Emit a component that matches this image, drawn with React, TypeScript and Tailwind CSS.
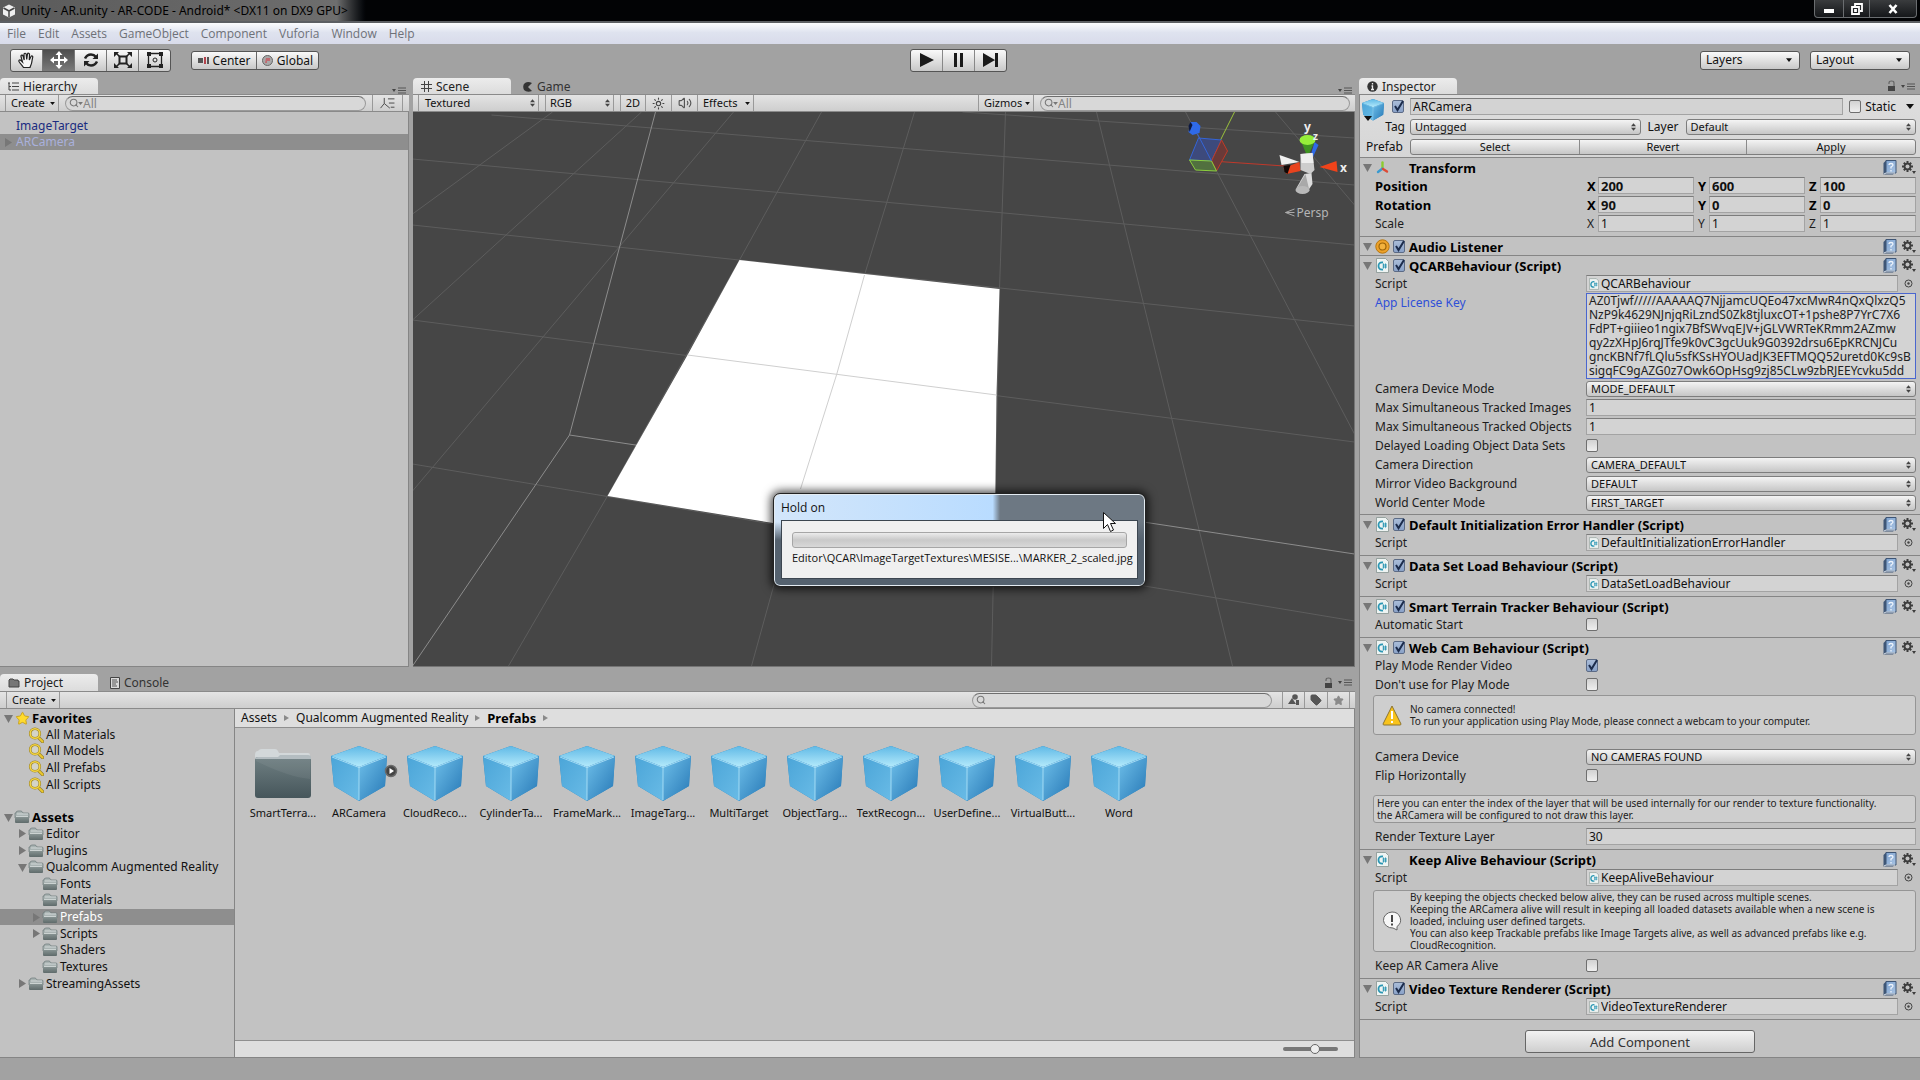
import { useId } from 'react'
import type { ReactNode } from 'react'
import { Search, Star, Sun, Tag, Volume2 } from 'lucide-react'
import clsx from 'clsx'

const MENUS = ['File', 'Edit', 'Assets', 'GameObject', 'Component', 'Vuforia', 'Window', 'Help']

const PREFABS = [
  'ARCamera',
  'CloudReco...',
  'CylinderTa...',
  'FrameMark...',
  'ImageTarg...',
  'MultiTarget',
  'ObjectTarg...',
  'TextRecogn...',
  'UserDefine...',
  'VirtualButt...',
  'Word',
]

const LICENSE_KEY = [
  'AZ0Tjwf/////AAAAAQ7NjjamcUQEo47xcMwR4nQxQlxzQ5',
  'NzP9k4629NJnjqRiLzndS0Zk8tjluxcOT+1pshe8P7YrC7X6',
  'FdPT+giiieo1ngix7BfSWvqEJV+jGLVWRTeKRmm2AZmw',
  'qy2zXHpJ6rqJTfe9k0vC3gcUuk9G0392drsu6EpKRCNJCu',
  'gncKBNf7fLQlu5sfKSsHYOUadJK3EFTMQQ52uretd0Kc9sB',
  'sigqFC9gAZG0z7Owk6OpHsg9zj85CLw9zbRJEEYcvku5dd',
].join('\n')

/* ---------- icons ---------- */

function SharedGradients() {
  return (
    <svg width="0" height="0" className="absolute" aria-hidden="true">
      <defs>
        <linearGradient id="cube-top" x1="0" y1="0" x2="0" y2="1">
          <stop offset="0" stopColor="#5fb9e6" />
          <stop offset="1" stopColor="#b5eafb" />
        </linearGradient>
        <linearGradient id="cube-left" x1="0" y1="0" x2="1" y2="1">
          <stop offset="0" stopColor="#4ba5d8" />
          <stop offset="1" stopColor="#69bbe6" />
        </linearGradient>
        <linearGradient id="cube-right" x1="0" y1="0" x2="1" y2="1">
          <stop offset="0" stopColor="#6fc0ea" />
          <stop offset="1" stopColor="#2677b5" />
        </linearGradient>
        <linearGradient id="folder" x1="0" y1="0" x2="0" y2="1">
          <stop offset="0" stopColor="#6f7f82" />
          <stop offset="1" stopColor="#46565b" />
        </linearGradient>
        <linearGradient id="folder-small" x1="0" y1="0" x2="0" y2="1">
          <stop offset="0" stopColor="#8d9998" />
          <stop offset="1" stopColor="#5f6b6b" />
        </linearGradient>
        <linearGradient id="book" x1="0" y1="0" x2="1" y2="1">
          <stop offset="0" stopColor="#7fa3cf" />
          <stop offset="1" stopColor="#a9c4e4" />
        </linearGradient>
      </defs>
    </svg>
  )
}

function Cube({ className }: { className?: string }) {
  return (
    <svg viewBox="0 0 56 56" className={className} aria-hidden="true">
      <path d="M28 0 56 10 54 40 28 55 3 40 0 10Z" fill="#2f86c0" />
      <path d="M28 0 56 10 28 21 0 10Z" fill="url(#cube-top)" />
      <path d="M0 10 28 21V55L3 40Z" fill="url(#cube-left)" />
      <path d="M56 10 28 21V55L54 40Z" fill="url(#cube-right)" />
      <path d="M1 11 28 21.500 55 11M28 21V54" fill="none" stroke="#b4e6fa" strokeWidth="1" opacity=".8" />
    </svg>
  )
}

function BigFolder() {
  return (
    <svg viewBox="0 0 58 50" className="h-[50px] w-[58px]" aria-hidden="true">
      <path d="M1 6q0-4 3-4l1-1q1-1 3-1h13q2 0 3 2l1 2h29q2 0 2 2v10H1Z" fill="#d3d8da" />
      <rect x="1" y="8" width="56" height="41" rx="3" fill="url(#folder)" />
      <path d="M1 10q0-2 3-2h20l2-2h28q3 0 3 3v1H1Z" fill="#b4bdc1" />
      <path d="M2 10h54v20Q34 28 2 12Z" fill="#fff" opacity=".06" />
    </svg>
  )
}

function FolderIcon() {
  return (
    <svg viewBox="0 0 16 14" className="h-[14px] w-4 shrink-0" aria-hidden="true">
      <path d="M2 3q0-2 2-2h3q1 0 2 2h5q1 0 1 1v4H1V3Z" fill="#a9b3b2" stroke="#6c7878" strokeWidth=".7" />
      <path d="M1 6h14v6q0 1-1 1H2q-1 0-1-1Z" fill="url(#folder-small)" />
      <path d="M3 4h11M2 6.500h12" stroke="#dde2e2" strokeWidth=".8" />
    </svg>
  )
}

function Magnifier() {
  return (
    <svg viewBox="0 0 16 16" className="h-4 w-4 shrink-0" aria-hidden="true">
      <path d="m10 10 4.500 4.500" stroke="#9a8224" strokeWidth="3.200" strokeLinecap="round" />
      <path d="m10 10 4.500 4.500" stroke="#ecc92f" strokeWidth="1.800" strokeLinecap="round" />
      <circle cx="7" cy="6.500" r="4.800" fill="#d4d4c8" stroke="#9a8224" strokeWidth="2.600" />
      <circle cx="7" cy="6.500" r="4.800" fill="none" stroke="#f3d443" strokeWidth="1.500" />
    </svg>
  )
}

function ScriptIcon({ className }: { className?: string }) {
  return (
    <svg viewBox="0 0 13 15" className={className} aria-hidden="true">
      <path d="M.5.500h9l3 3v11H.500Z" fill="#eef4f3" stroke="#85938f" strokeWidth=".8" />
      <path d="M7 4.500Q2.500 4 2.500 8t4.500 3.500" fill="none" stroke="#2b96b3" strokeWidth="1.800" />
      <path d="M7.500 5.500v5M9.500 5.500v5M6.500 7h4.500M6.500 9h4.500" stroke="#2b96b3" strokeWidth=".9" />
    </svg>
  )
}

function HelpBook() {
  return (
    <svg viewBox="0 0 14 15" className="h-[15px] w-[14px]" aria-hidden="true">
      <path d="M.5 3 3 .5h9v12L10 14.500H.500Z" fill="#3f5676" />
      <path d="M3 .5h10v12.500H3Z" fill="url(#book)" stroke="#3f5676" strokeWidth="1" />
      <path d="M1 14 3 13h9" stroke="#dfe6ef" strokeWidth="1" fill="none" />
      <path d="M6 5q0-1.500 2-1.500T10 5q0 1-2 2v1.500M8 10v1.500" fill="none" stroke="#eef4fc" strokeWidth="1.300" />
    </svg>
  )
}

function Gear() {
  return (
    <svg viewBox="0 0 14 14" className="h-[14px] w-[14px]" aria-hidden="true">
      <g stroke="#3d3d3d" strokeWidth="2">
        <path d="M5.500 0v11M0 5.500h11M1.800 1.800l7.400 7.400M9.200 1.800l-7.400 7.400" />
      </g>
      <circle cx="5.500" cy="5.500" r="3.800" fill="#3d3d3d" />
      <circle cx="5.500" cy="5.500" r="2" fill="#c2c2c2" />
      <path d="M10 10h4l-2 3Z" fill="#3d3d3d" />
    </svg>
  )
}

function LockIcon() {
  return (
    <svg viewBox="0 0 9 12" className="mr-[5px] h-3 w-[9px]" aria-hidden="true">
      <path d="M2 4V3q0-2 2.500-2T7 3v3" fill="none" stroke="#666" strokeWidth="1.200" />
      <path d="M1 6h7v5H1Z" fill="#444" />
    </svg>
  )
}

function Caret({ className }: { className?: string }) {
  return (
    <svg viewBox="0 0 8 5" className={clsx('shrink-0', className)} aria-hidden="true">
      <path d="M0 0h8L4 5Z" fill="currentColor" />
    </svg>
  )
}

function Foldout({ open }: { open?: boolean }) {
  return (
    <svg viewBox="0 0 9 9" className="h-[9px] w-[9px] shrink-0 text-[#777]" aria-hidden="true">
      <path d={open ? 'M0 1h9L4.500 9Z' : 'M1 0v9l7-4.500Z'} fill="currentColor" />
    </svg>
  )
}

function PopupArrows() {
  return (
    <svg viewBox="0 0 5 8" className="h-2 w-[5px] shrink-0" aria-hidden="true">
      <path d="M0 3.200h5L2.500.300ZM0 4.800h5L2.500 7.700Z" fill="#444" />
    </svg>
  )
}

function PaneMenu() {
  return (
    <svg viewBox="0 0 14 7" className="h-[7px] w-[14px]" aria-hidden="true">
      <path d="M0 2h4L2 5Z" fill="#444" />
      <path d="M6 1h8M6 3.500h8M6 6h8" stroke="#555" strokeWidth="1.200" />
    </svg>
  )
}

/* ---------- controls ---------- */

function Checkbox({ id, checked, label }: { id?: string; checked?: boolean; label?: string }) {
  return (
    <span className="relative block h-[13px] w-[13px] shrink-0">
      <input
        id={id}
        type="checkbox"
        defaultChecked={checked}
        aria-label={label}
        className="peer block h-[13px] w-[12px] appearance-none rounded-[2px] border border-[#6f6f6f] bg-linear-to-b from-[#d2d2d2] to-[#efefef] checked:border-[#5c6b86] checked:from-[#a9bcd8] checked:to-[#8aa2c8]"
      />
      <svg
        viewBox="0 0 13 13"
        className="pointer-events-none absolute inset-0 hidden overflow-visible peer-checked:block"
        aria-hidden="true"
      >
        <path d="M3 6 5.500 10 11 1" fill="none" stroke="#1c2c4c" strokeWidth="2" />
      </svg>
    </span>
  )
}

function Popup({ id, value, label }: { id?: string; value: string; label?: string }) {
  return (
    <span className="relative flex h-4 min-w-0 flex-1 items-center">
      <select
        id={id}
        aria-label={label}
        className="h-4 w-full appearance-none rounded-[3px] border border-[#7d7d7d] bg-linear-to-b from-[#f4f4f4] to-[#c6c6c6] px-[4px] text-[11px] leading-[14px] text-[#111]"
      >
        <option>{value}</option>
      </select>
      <span className="pointer-events-none absolute right-[5px]">
        <PopupArrows />
      </span>
    </span>
  )
}

const fieldClass =
  'h-[17px] min-w-0 flex-1 border border-[#a3a3a3] border-t-[#7c7c7c] bg-[#d3d3d3] px-[2px] leading-[15px] text-[#111] outline-none'

function Row({ label, blue, children }: { label: string; blue?: boolean; children: (id: string) => ReactNode }) {
  const id = useId()
  return (
    <div className="flex min-h-[19px] items-start pr-1 pl-[15px]">
      <label htmlFor={id} className={clsx('w-[211px] shrink-0 leading-[19px]', blue && 'text-[#2f4fd8]')}>
        {label}
      </label>
      <div className="flex min-h-[19px] min-w-0 flex-1 items-center">{children(id)}</div>
    </div>
  )
}

function NumberRow({ label, value }: { label: string; value: string }) {
  return <Row label={label}>{(id) => <input id={id} defaultValue={value} className={fieldClass} />}</Row>
}

function PopupRow({ label, value }: { label: string; value: string }) {
  return <Row label={label}>{(id) => <Popup id={id} value={value} />}</Row>
}

function ToggleRow({ label, checked }: { label: string; checked?: boolean }) {
  return <Row label={label}>{(id) => <Checkbox id={id} checked={checked} />}</Row>
}

function ScriptRow({ name }: { name: string }) {
  return (
    <Row label="Script">
      {(id) => (
        <>
          <span className="relative flex min-w-0 flex-1 items-center">
            <input id={id} readOnly defaultValue={name} className={clsx(fieldClass, 'pl-[14px]')} />
            <ScriptIcon className="absolute left-[3px] h-[12px] w-[10px]" />
          </span>
          <button type="button" aria-label={`Pick ${name}`} className="flex w-[18px] justify-end pr-[3px]">
            <svg viewBox="0 0 9 9" className="h-[9px] w-[9px]">
              <circle cx="4.500" cy="4.500" r="3.500" fill="none" stroke="#444" />
              <circle cx="4.500" cy="4.500" r="1.200" fill="#444" />
            </svg>
          </button>
        </>
      )}
    </Row>
  )
}

function VectorRow({ label, values, bold }: { label: string; values: string[]; bold?: boolean }) {
  return (
    <fieldset className={clsx('flex h-[19px] items-center pr-1 pl-[15px]', bold && 'text-[13px] font-bold text-black')}>
      <legend className="contents">
        <span className="w-[212px] shrink-0">{label}</span>
      </legend>
      <div className="grid flex-1 grid-cols-3 gap-x-1">
        {['X', 'Y', 'Z'].map((axis, i) => (
          <label key={axis} className="flex min-w-0 items-center">
            <span className="w-[11px] shrink-0">{axis}</span>
            <input defaultValue={values[i]} className={fieldClass} />
          </label>
        ))}
      </div>
    </fieldset>
  )
}

interface SectionProps {
  title: string
  icon?: ReactNode
  toggle?: boolean
  className?: string
  children?: ReactNode
}

function Section({ title, icon, toggle = true, className = 'pb-[3px]', children }: SectionProps) {
  return (
    <section className={clsx('border-t border-[#858585]', className)}>
      <div className="flex h-[18px] items-center pt-px pr-1 pl-[3px]">
        <span className="w-[13px] shrink-0">
          <Foldout open />
        </span>
        <span className="w-[17px] shrink-0">{icon ?? <ScriptIcon className="h-[15px] w-[13px]" />}</span>
        <span className="w-4 shrink-0">{toggle && <Checkbox checked label={`Enable ${title}`} />}</span>
        <h2 className="flex-1 text-[13px] font-bold text-black">{title}</h2>
        <button type="button" aria-label="Help" className="mr-[5px]">
          <HelpBook />
        </button>
        <button type="button" aria-label="Settings">
          <Gear />
        </button>
      </div>
      {children}
    </section>
  )
}

function HelpBox({ icon, className, children }: { icon?: ReactNode; className: string; children: ReactNode }) {
  return (
    <div
      className={clsx(
        'mr-1 ml-[13px] flex items-center rounded-[3px] border border-[#959595] bg-[#cecece] text-[10px] leading-[12px] text-[#222]',
        className,
      )}
    >
      {icon && <span className="flex w-9 shrink-0 justify-center">{icon}</span>}
      <p className={clsx(!icon && 'pl-[3px]')}>{children}</p>
    </div>
  )
}

/* ---------- panes ---------- */

function ActiveTab({ icon, children }: { icon: ReactNode; children: ReactNode }) {
  return (
    <button
      type="button"
      className="flex h-full w-[98px] items-center gap-1 rounded-t-[4px] bg-linear-to-b from-[#ececec] to-[#dcdcdc] pt-px pl-2 text-[#222]"
    >
      {icon}
      {children}
    </button>
  )
}

function PaneBar({ children }: { children: ReactNode }) {
  return (
    <div className="flex h-[18px] shrink-0 items-center border-t border-b border-t-[#8a8a8a] border-b-[#8a8a8a] bg-linear-to-b from-[#e4e4e4] to-[#cecece] text-[11px] text-[#111]">
      {children}
    </div>
  )
}

function Divider() {
  return <span className="h-full w-px shrink-0 bg-[#999]" />
}

function SearchField({ label, placeholder, className }: { label: string; placeholder?: string; className: string }) {
  return (
    <span className={clsx('relative flex items-center', className)}>
      <input
        type="text"
        aria-label={label}
        placeholder={placeholder}
        className="h-[15px] w-full rounded-full border border-[#9a9a9a] border-t-[#6e6e6e] bg-[#d8d8d8] pl-[17px] text-[12px] leading-[13px] outline-none placeholder:text-[#858585]"
      />
      <Search className="absolute left-1 h-[10px] w-[10px] text-[#777]" strokeWidth={2.5} />
      {placeholder && <Caret className="absolute left-[13px] h-[3px] w-[5px] text-[#777]" />}
    </span>
  )
}

function Hierarchy() {
  return (
    <section className="flex w-[409px] shrink-0 flex-col">
      <div className="flex h-4 items-end justify-between pr-[3px]">
        <ActiveTab
          icon={
            <svg viewBox="0 0 11 9" className="h-[9px] w-[11px]">
              <path d="M0 1h2M1 1v7M1 4.500h2M1 8h2M4 1h7M4 4.500h7M4 8h7" stroke="#444" />
            </svg>
          }
        >
          Hierarchy
        </ActiveTab>
        <PaneMenu />
      </div>
      <PaneBar>
        <span className="w-[5px]" />
        <Divider />
        <button type="button" className="flex h-full w-[52px] items-center gap-[5px] pl-[5px]">
          Create <Caret className="h-[3px] w-[5px]" />
        </button>
        <Divider />
        <SearchField label="Search hierarchy" placeholder="All" className="mx-[6px] flex-1" />
        <Divider />
        <button type="button" aria-label="Sort" className="flex h-full w-[29px] items-center justify-center">
          <svg viewBox="0 0 17 14" className="h-[13px] w-[17px]" fill="none" stroke="#444">
            <path d="M5 1v6M5 7 1 12M5 7l6 5M9 2h7M10 6.500h6M12 11h4" />
          </svg>
        </button>
        <Divider />
        <span className="w-[6px]" />
      </PaneBar>
      <ul className="flex-1 border-r border-b border-[#858585] bg-[#c2c2c2] pt-[6px]">
        <li className="flex h-4 items-center pl-4 text-[#1a2c80]">ImageTarget</li>
        <li className="flex h-4 items-center bg-[#8e8e8e] pl-1 text-[#a9b0dc]">
          <span className="w-3">
            <Foldout />
          </span>
          ARCamera
        </li>
      </ul>
    </section>
  )
}

function SceneView() {
  return (
    <div className="relative min-h-0 flex-1 border-r border-b border-[#757575] bg-[#464646]">
      <svg viewBox="0 0 942 554" preserveAspectRatio="xMidYMid slice" className="absolute inset-0 h-full w-full">
        {/* floor grid */}
        <g fill="none" stroke="#5d5d5d">
          <path d="M550 0 942 26M79 3 942 73M0 47 942 133M0 113 942 214M0 208 942 330M0 352 942 509" />
          <path d="M140 0 0 102M229 0 0 208M321 0 0 379M409 0 327 148 195 384 96 554M502 0 452 163 388 377 339 554" />
          <path d="M593 0 587 177 579 554M684 0 820 554M773 0 942 322M863 0 942 93" />
        </g>
        <path d="M243 0 157 323 0 554M157 323 942 442" fill="none" stroke="#8c8c8c" />
        {/* image target plane */}
        <path d="M327 148 587 177 584 283 582 447 195 384 275 243Z" fill="#fff" />
        <path d="M452 163 424 263 388 377M275 243 584 283" fill="none" stroke="#cfcfcf" />
        {/* move handle */}
        <path d="M822 0 808 28" stroke="#9bc23c" />
        <path d="M799 49 872 54" stroke="#c0392b" />
        <path d="M786 26 809 28 799 49 777 48Z" fill="#3d4a7c" stroke="#3465d8" />
        <path d="M809 28 815 39 804 59 799 49Z" fill="#6a3a38" stroke="#c23a26" />
        <path d="M777 48 799 49 804 59 783 58Z" fill="#51703f" stroke="#8ccf3e" />
        <path d="M785 22 799 49" stroke="#3465d8" />
        <path d="M778 10 784 10 788 14 787 21 780 23 776 20Z" fill="#2f6ae8" />
        <path d="M776 14 778 10 780 13 777 20Z" fill="#0c1840" />
        {/* orientation gizmo */}
        <path d="M898 44 902 30 906 33 900 46Z" fill="#2f6ae8" />
        <path d="M888 28 895 45 903 28Z" fill="#3f9322" />
        <ellipse cx="895" cy="28" rx="8" ry="5" fill="#96ee3a" />
        <path d="M867 43 869 53 887 50Z" fill="#f0f0f0" />
        <path d="M887 50 871 56 874 62 888 59Z" fill="#e8431e" />
        <path d="M871 54 878 53 875 62 872 60Z" fill="#120806" />
        <path d="M907 55 924 49 925 60Z" fill="#f0431a" />
        <path d="M892 62 884 76 896 78 900 72 899 61Z" fill="#dcdcdc" />
        <path d="M893 62 884 77 897 79Z" fill="#a9a9a9" />
        <ellipse cx="890" cy="78" rx="7" ry="4" fill="#b9b9b9" />
        <path d="M888 42 900 41 902 58 898 62 888 58Z" fill="#cdcdcd" />
        <path d="M888 42 900 41 901 51 889 51Z" fill="#eee" />
        <g fill="#eee" fontFamily="Noto Sans" fontSize="12" fontWeight="bold" textAnchor="middle">
          <text x="895" y="19">y</text>
          <text x="903" y="28" fontSize="10">z</text>
          <text x="931" y="60">x</text>
        </g>
        <path d="M882 97 873 100.500 882 104M873 100.500h9" fill="none" stroke="#aaa" />
        <text x="884" y="105" fill="#b5b5b5" fontFamily="Noto Sans" fontSize="12">
          Persp
        </text>
      </svg>
    </div>
  )
}

function Scene() {
  return (
    <section className="flex min-w-0 flex-1 flex-col">
      <div className="flex h-4 items-end pr-[3px]">
        <ActiveTab
          icon={
            <svg viewBox="0 0 11 11" className="h-[11px] w-[11px]">
              <path d="M3.500 0v11M7.500 0v11M0 3.500h11M0 7.500h11" stroke="#444" />
            </svg>
          }
        >
          Scene
        </ActiveTab>
        <button type="button" className="ml-3 flex h-full items-center gap-[5px] pt-px text-[#333]">
          <svg viewBox="0 0 9 10" className="h-[10px] w-[9px]">
            <path d="M9 1Q5-1 2 1T1 8q3 3 8 1L5 5Z" fill="#333" />
          </svg>
          Game
        </button>
        <span className="flex-1" />
        <PaneMenu />
      </div>
      <PaneBar>
        <span className="w-[5px]" />
        <Divider />
        <button type="button" className="flex h-full w-[119px] items-center justify-between pr-[3px] pl-[6px]">
          Textured <PopupArrows />
        </button>
        <Divider />
        <span className="w-[6px]" />
        <Divider />
        <button type="button" className="flex h-full w-[67px] items-center justify-between pr-[3px] pl-[4px]">
          RGB <PopupArrows />
        </button>
        <Divider />
        <span className="w-[6px]" />
        <Divider />
        <button type="button" className="flex h-full w-6 items-center justify-center">
          2D
        </button>
        <Divider />
        <button type="button" aria-label="Lighting" className="flex h-full w-[25px] items-center justify-center">
          <Sun className="h-[13px] w-[13px] text-[#444]" />
        </button>
        <Divider />
        <button type="button" aria-label="Audio" className="flex h-full w-[25px] items-center justify-center">
          <Volume2 className="h-[14px] w-[14px] text-[#555]" />
        </button>
        <Divider />
        <button type="button" className="flex h-full w-[55px] items-center justify-between pr-[3px] pl-[5px]">
          Effects <Caret className="h-[3px] w-[5px]" />
        </button>
        <Divider />
        <span className="flex-1" />
        <Divider />
        <button type="button" className="flex h-full w-[54px] items-center justify-between pr-[3px] pl-[5px]">
          Gizmos <Caret className="h-[3px] w-[5px]" />
        </button>
        <Divider />
        <SearchField label="Search scene" placeholder="All" className="mr-[5px] ml-[6px] w-[310px]" />
      </PaneBar>
      <SceneView />
    </section>
  )
}

function TreeItem({
  level,
  fold,
  icon = <FolderIcon />,
  bold,
  selected,
  children,
}: {
  level: 0 | 1 | 2
  fold?: 'open' | 'closed'
  icon?: ReactNode
  bold?: boolean
  selected?: boolean
  children: string
}) {
  return (
    <li
      className={clsx(
        'flex items-center gap-[2px]',
        level === 0 && 'pl-1',
        level === 1 && 'pl-[18px]',
        level === 2 && 'pl-8',
        bold && 'text-[13px] font-bold text-black',
        selected && 'bg-[#8e8e8e] text-white',
      )}
    >
      <span className="-mr-[2px] w-[10px] shrink-0">{fold && <Foldout open={fold === 'open'} />}</span>
      <span className="flex w-4 shrink-0 justify-center">{icon}</span>
      {children}
    </li>
  )
}

function Project() {
  return (
    <section className="flex h-[384px] shrink-0 flex-col">
      <div className="flex h-[17px] items-center pr-[3px]">
        <ActiveTab
          icon={
            <svg viewBox="0 0 12 10" className="h-[10px] w-3">
              <path d="M1 2 2 1h3l1 1h4v1h1v6H1Z" fill="#777" stroke="#444" />
            </svg>
          }
        >
          Project
        </ActiveTab>
        <button type="button" className="ml-3 flex h-full items-center gap-1 pt-px text-[#333]">
          <svg viewBox="0 0 10 12" className="h-3 w-[10px]">
            <path d="M.5.500h9v11h-9Z" fill="#d9d9d9" stroke="#444" />
            <path d="M2 3h5M2 5h6M2 7h4M2 9h5" stroke="#555" />
          </svg>
          Console
        </button>
        <span className="flex-1" />
        <LockIcon />
        <PaneMenu />
      </div>
      <PaneBar>
        <span className="w-[6px]" />
        <Divider />
        <button type="button" className="flex h-full w-[52px] items-center gap-[5px] pl-[5px]">
          Create <Caret className="h-[3px] w-[5px]" />
        </button>
        <Divider />
        <span className="flex-1" />
        <SearchField label="Search project" className="mr-[10px] w-[300px]" />
        <Divider />
        <button type="button" aria-label="Filter by type" className="flex h-full w-[21px] items-center justify-center">
          <svg viewBox="0 0 12 12" className="h-3 w-3">
            <circle cx="7" cy="3" r="2.800" fill="#555" />
            <path d="M0 10 4 4l4 6ZM8 6h3v5H8Z" fill="#555" />
          </svg>
        </button>
        <Divider />
        <button type="button" aria-label="Filter by label" className="flex h-full w-[22px] items-center justify-center">
          <Tag className="h-3 w-3 fill-[#555] text-[#555]" />
        </button>
        <Divider />
        <button type="button" aria-label="Save search" className="flex h-full w-[21px] items-center justify-center">
          <Star className="h-[11px] w-[11px] fill-[#8a8a8a] text-[#8a8a8a]" />
        </button>
        <Divider />
        <span className="w-[5px]" />
      </PaneBar>
      <div className="flex min-h-0 flex-1 border-r border-b border-[#858585] bg-[#c2c2c2]">
        <nav className="w-[235px] shrink-0 border-r border-[#858585] pt-px text-[#111]">
          <ul className="grid h-[83px] auto-rows-fr">
            <TreeItem
              level={0}
              fold="open"
              bold
              icon={
                <Star className="h-[15px] w-[15px] fill-[#ffdb2e] text-[#c79f1a]" strokeWidth={1.5} />
              }
            >
              Favorites
            </TreeItem>
            {['All Materials', 'All Models', 'All Prefabs', 'All Scripts'].map((name) => (
              <TreeItem key={name} level={1} icon={<Magnifier />}>
                {name}
              </TreeItem>
            ))}
          </ul>
          <ul className="mt-4 grid h-[183px] auto-rows-fr">
            <TreeItem level={0} fold="open" bold>Assets</TreeItem>
            <TreeItem level={1} fold="closed">Editor</TreeItem>
            <TreeItem level={1} fold="closed">Plugins</TreeItem>
            <TreeItem level={1} fold="open">Qualcomm Augmented Reality</TreeItem>
            <TreeItem level={2}>Fonts</TreeItem>
            <TreeItem level={2}>Materials</TreeItem>
            <TreeItem level={2} fold="closed" selected>Prefabs</TreeItem>
            <TreeItem level={2} fold="closed">Scripts</TreeItem>
            <TreeItem level={2}>Shaders</TreeItem>
            <TreeItem level={2}>Textures</TreeItem>
            <TreeItem level={1} fold="closed">StreamingAssets</TreeItem>
          </ul>
        </nav>
        <div className="flex min-w-0 flex-1 flex-col">
          <div className="flex h-[19px] items-center gap-[7px] border-b border-[#8f8f8f] bg-[#dedede] pl-[6px] text-[#111]">
            <span>Assets</span>
            <BreadcrumbArrow />
            <span>Qualcomm Augmented Reality</span>
            <BreadcrumbArrow />
            <span className="text-[13px] font-bold text-black">Prefabs</span>
            <BreadcrumbArrow />
          </div>
          <ul className="flex flex-1 flex-wrap content-start pt-[18px] pl-[10px] text-[11px] text-[#111]">
            <li className="flex w-[76px] flex-col items-center">
              <span className="flex h-14 items-center">
                <BigFolder />
              </span>
              <span className="mt-[3px] leading-4">SmartTerra...</span>
            </li>
            {PREFABS.map((name, i) => (
              <li key={name} className="relative flex w-[76px] flex-col items-center">
                <Cube className="h-14 w-14" />
                {i === 0 && (
                  <svg viewBox="0 0 14 14" className="absolute top-[18px] -right-[1px] h-[14px] w-[14px]">
                    <circle cx="7" cy="7" r="5.500" fill="#444" stroke="#6a6a6a" strokeWidth="1.500" />
                    <path d="M5.500 4v6L10 7Z" fill="#fff" />
                  </svg>
                )}
                <span className="mt-[3px] leading-4">{name}</span>
              </li>
            ))}
          </ul>
          <div className="flex h-[17px] items-center justify-end border-t border-[#8f8f8f] bg-[#dedede] pr-4">
            <input
              type="range"
              aria-label="Icon size"
              defaultValue={60}
              className="h-3 w-[55px] appearance-none bg-transparent [&::-webkit-slider-runnable-track]:h-1 [&::-webkit-slider-runnable-track]:rounded-full [&::-webkit-slider-runnable-track]:bg-[#777] [&::-webkit-slider-thumb]:-mt-[3px] [&::-webkit-slider-thumb]:h-[10px] [&::-webkit-slider-thumb]:w-[10px] [&::-webkit-slider-thumb]:appearance-none [&::-webkit-slider-thumb]:rounded-full [&::-webkit-slider-thumb]:border [&::-webkit-slider-thumb]:border-[#666] [&::-webkit-slider-thumb]:bg-[#eee]"
            />
          </div>
        </div>
      </div>
    </section>
  )
}

function BreadcrumbArrow() {
  return (
    <svg viewBox="0 0 5 6" className="h-[6px] w-[5px]" aria-hidden="true">
      <path d="M0 0v6l5-3Z" fill="#8a8a8a" />
    </svg>
  )
}

function Inspector() {
  const layerId = useId()
  const tagId = useId()
  const staticId = useId()
  return (
    <section className="flex w-[561px] shrink-0 flex-col text-[#1c1c1c]">
      <div className="flex h-4 items-center pr-[5px]">
        <ActiveTab
          icon={
            <svg viewBox="0 0 11 11" className="h-[11px] w-[11px]">
              <circle cx="5.500" cy="5.500" r="5.200" fill="#333" />
              <path d="M5.500 2v1.500M4.500 5h1v3.500M4 8.500h3" stroke="#eee" strokeWidth="1.300" fill="none" />
            </svg>
          }
        >
          Inspector
        </ActiveTab>
        <span className="flex-1" />
        <LockIcon />
        <PaneMenu />
      </div>
      <div className="flex-1 border-t border-b border-l border-[#858585] bg-[#c2c2c2]">
        <header className="h-[62px] bg-linear-to-b from-[#dedede] to-[#d6d6d6] pt-[3px] pr-1 text-[#111]">
          <div className="flex h-[17px] items-center">
            <span className="relative w-8 shrink-0 self-start">
              <Cube className="absolute top-px left-[2px] h-[22px] w-[22px]" />
              <Caret className="absolute top-[18px] left-1 h-[5px] w-2" />
            </span>
            <Checkbox checked label="Active" />
            <input aria-label="Name" defaultValue="ARCamera" className={clsx(fieldClass, 'ml-[5px]')} />
            <span className="mr-[3px] ml-[6px]">
              <Checkbox id={staticId} />
            </span>
            <label htmlFor={staticId}>Static</label>
            <Caret className="mr-[2px] ml-[10px] h-[5px] w-2" />
          </div>
          <div className="mt-[3px] flex h-[17px] items-center">
            <label htmlFor={tagId} className="w-[50px] pr-[5px] text-right">
              Tag
            </label>
            <Popup id={tagId} value="Untagged" />
            <label htmlFor={layerId} className="w-[45px] pl-[7px]">
              Layer
            </label>
            <Popup id={layerId} value="Default" />
          </div>
          <div className="mt-[3px] flex h-[17px] items-center">
            <span className="w-[50px] pl-[6px]">Prefab</span>
            <div className="grid h-4 flex-1 grid-cols-3 overflow-hidden rounded-[3px] border border-[#7d7d7d] bg-linear-to-b from-[#f4f4f4] to-[#c6c6c6] text-[11px] leading-[14px]">
              <button type="button">Select</button>
              <button type="button" className="border-x border-[#8a8a8a]">
                Revert
              </button>
              <button type="button">Apply</button>
            </div>
          </div>
        </header>

        <Section
          title="Transform"
          toggle={false}
          icon={
            <svg viewBox="0 0 13 13" className="h-[13px] w-[13px]" strokeWidth="2.400" strokeLinecap="round">
              <path d="M6.500 1.500V7" stroke="#8ccc2e" />
              <path d="M6.500 7.500 2 11" stroke="#3a9ad0" />
              <path d="M7 8 11 10.500" stroke="#dd4a36" />
            </svg>
          }
        >
          <VectorRow label="Position" values={['200', '600', '100']} bold />
          <VectorRow label="Rotation" values={['90', '0', '0']} bold />
          <VectorRow label="Scale" values={['1', '1', '1']} />
        </Section>

        <Section
          title="Audio Listener"
          className=""
          icon={
            <svg viewBox="0 0 15 15" className="-ml-px h-[15px] w-[15px]">
              <circle cx="7.500" cy="7.500" r="6.700" fill="#eda22a" stroke="#b8770f" />
              <circle cx="7.500" cy="7.500" r="3.500" fill="#f3b23d" stroke="#9c6409" strokeWidth="1.200" />
            </svg>
          }
        />

        <Section title="QCARBehaviour (Script)" className="pb-[2px]">
          <ScriptRow name="QCARBehaviour" />
          <Row label="App License Key" blue>
            {(id) => (
              <textarea
                id={id}
                defaultValue={LICENSE_KEY}
                wrap="off"
                className="block h-[86px] w-full resize-none overflow-hidden border border-[#4a66cf] bg-[#d3d3d3] px-[2px] text-[12px] leading-[14px] text-[#222] outline-none"
              />
            )}
          </Row>
          <PopupRow label="Camera Device Mode" value="MODE_DEFAULT" />
          <NumberRow label="Max Simultaneous Tracked Images" value="1" />
          <NumberRow label="Max Simultaneous Tracked Objects" value="1" />
          <ToggleRow label="Delayed Loading Object Data Sets" />
          <PopupRow label="Camera Direction" value="CAMERA_DEFAULT" />
          <PopupRow label="Mirror Video Background" value="DEFAULT" />
          <PopupRow label="World Center Mode" value="FIRST_TARGET" />
        </Section>

        <Section title="Default Initialization Error Handler (Script)">
          <ScriptRow name="DefaultInitializationErrorHandler" />
        </Section>

        <Section title="Data Set Load Behaviour (Script)">
          <ScriptRow name="DataSetLoadBehaviour" />
        </Section>

        <Section title="Smart Terrain Tracker Behaviour (Script)">
          <ToggleRow label="Automatic Start" />
        </Section>

        <Section title="Web Cam Behaviour (Script)">
          <ToggleRow label="Play Mode Render Video" checked />
          <ToggleRow label="Don't use for Play Mode" />
          <HelpBox
            className="mt-px mb-3 h-10"
            icon={
              <svg viewBox="0 0 20 21" className="h-[21px] w-5">
                <path d="M10 1 19 19q0 1-1 1H2q-1 0-1-1Z" fill="#f8c31c" stroke="#8c7430" />
                <path d="M10 6v8M10 16v2" stroke="#fff" strokeWidth="2" />
              </svg>
            }
          >
            No camera connected!
            <br />
            To run your application using Play Mode, please connect a webcam to your computer.
          </HelpBox>
          <PopupRow label="Camera Device" value="NO CAMERAS FOUND" />
          <ToggleRow label="Flip Horizontally" />
          <HelpBox className="mt-[10px] mb-1 h-7">
            Here you can enter the index of the layer that will be used internally for our render to texture functionality.
            <br />
            the ARCamera will be configured to not draw this layer.
          </HelpBox>
          <NumberRow label="Render Texture Layer" value="30" />
        </Section>

        <Section title="Keep Alive Behaviour (Script)" toggle={false}>
          <ScriptRow name="KeepAliveBehaviour" />
          <HelpBox
            className="mt-[3px] mb-1 h-[62px]"
            icon={
              <svg viewBox="0 0 20 20" className="h-5 w-5">
                <path d="M10 1a9 8 0 1 0 1 16l4 2v-3.500A8.500 8 0 0 0 10 1Z" fill="#f7f7f7" stroke="#666" />
                <path d="M10 4v7M10 12.500v2" stroke="#444" strokeWidth="2" />
              </svg>
            }
          >
            By keeping the objects checked below alive, they can be rused across multiple scenes.
            <br />
            Keeping the ARCamera alive will result in keeping all loaded datasets available when a new scene is
            <br />
            loaded, incluing user defined targets.
            <br />
            You can also keep Trackable prefabs like Image Targets alive, as well as advanced prefabs like e.g.
            <br />
            CloudRecognition.
          </HelpBox>
          <ToggleRow label="Keep AR Camera Alive" />
        </Section>

        <Section title="Video Texture Renderer (Script)">
          <ScriptRow name="VideoTextureRenderer" />
        </Section>

        <div className="flex justify-center border-t border-[#858585] pt-[10px]">
          <button
            type="button"
            className="h-[23px] w-[230px] rounded-[3px] border border-[#666] bg-linear-to-b from-[#f2f2f2] to-[#cfcfcf] text-[13px] leading-5 text-[#333]"
          >
            Add Component
          </button>
        </div>
      </div>
    </section>
  )
}

function TitleBar() {
  return (
    <header className="flex h-[23px] shrink-0 items-start border-b-2 border-[#5c5f63] bg-[#020305]">
      <h1 className="flex h-full items-center gap-[5px] bg-linear-to-r from-[#5a5a5a] via-[#6e6e6e] via-92% to-[#020305] pr-[18px] pl-[2px] text-black">
        <svg viewBox="0 0 14 14" className="h-[14px] w-[14px]">
          <path d="M7 .5 13 3.500v7L7 13.500 1 10.500v-7Z" fill="#eee" />
          <path d="M7 7V13M7 7 1.500 4M7 7l5.500-3" stroke="#444" strokeWidth="1.500" />
        </svg>
        Unity - AR.unity - AR-CODE - Android* &lt;DX11 on DX9 GPU&gt;
      </h1>
      <span className="flex-1" />
      <div className="mr-[3px] flex h-[18px] rounded-b-[4px] border border-t-0 border-[#6a6d70] bg-linear-to-b from-[#3a3c3e] to-[#15171a]">
        <button type="button" aria-label="Minimize" className="flex w-7 items-center justify-center">
          <span className="mt-1 h-1 w-[10px] bg-white" />
        </button>
        <button
          type="button"
          aria-label="Restore"
          className="flex w-[27px] items-center justify-center border-x border-[#6a6d70]"
        >
          <svg viewBox="0 0 12 12" className="h-3 w-3" fill="none" stroke="#fff" strokeWidth="1.800">
            <path d="M4 3V1h7v7H9M1 4h7v7H1ZM4 7h1v1H4Z" />
          </svg>
        </button>
        <button type="button" aria-label="Close" className="flex w-[46px] items-center justify-center">
          <svg viewBox="0 0 10 10" className="h-[10px] w-[10px]">
            <path d="M1.500 1 8.500 9M8.500 1 1.500 9" stroke="#fff" strokeWidth="2.600" />
          </svg>
        </button>
      </div>
    </header>
  )
}

const raised = 'border border-[#555] bg-linear-to-b from-[#fafafa] to-[#c8c8c8]'

function Toolbar() {
  return (
    <div className="relative flex h-[34px] shrink-0 items-center justify-between px-[10px] pb-[2px] text-[#111]">
      <div className="flex items-center">
        <div className={clsx('flex h-[23px] divide-x divide-[#777] overflow-hidden rounded-[3px]', raised)}>
          <button type="button" aria-label="Hand" className="flex w-8 items-center justify-center">
            <svg viewBox="0 0 17 17" className="h-[17px] w-[17px]" aria-hidden="true">
              <path
                d="M5.500 15.500C4 13 2 11.500 1 9.500.5 8 2 7.500 3 8.500L4.500 10 3 4.500C2.700 3 4.500 2.500 5 4l1.200 4L6 2.500C6 1 8 .8 8.200 2.300L8.700 7.500 9.500 2C9.800.8 11.500 1 11.500 2.500L11.300 8 13 4.500c.7-1.200 2-.5 1.700.8-.5 2-.7 3.500-1 5.200-.2 2-1.200 3-1.700 5Z"
                fill="#f6f6f6"
                stroke="#222"
                strokeWidth="1.200"
              />
            </svg>
          </button>
          <button
            type="button"
            aria-label="Move"
            className="flex w-8 items-center justify-center bg-linear-to-b from-[#4e4e4e] to-[#7a7a7a]"
          >
            <svg viewBox="0 0 18 18" className="h-[18px] w-[18px]" fill="#fff">
              <path d="M9 0l3.500 4H10v4h4V5.500L18 9l-4 3.500V10h-4v4h2.500L9 18l-3.500-4H8v-4H4v2.500L0 9l4-3.500V8h4V4H5.500Z" />
            </svg>
          </button>
          <button type="button" aria-label="Rotate" className="flex w-8 items-center justify-center">
            <svg viewBox="0 0 16 16" className="h-4 w-4">
              <path d="M2 6.500Q4 2.500 8 2.500q3 0 5 2.500M14 9.500Q12 13.500 8 13.500q-3 0-5-2.500" fill="none" stroke="#222" strokeWidth="2.600" />
              <path d="M15 1.500V7H9.500ZM1 14.500V9h5.500Z" fill="#222" />
            </svg>
          </button>
          <button type="button" aria-label="Scale" className="flex w-8 items-center justify-center">
            <svg viewBox="0 0 18 18" className="h-[18px] w-[18px]">
              <path d="M2 2 16 16M16 2 2 16" stroke="#222" strokeWidth="1.500" />
              <path d="M0 1h5L0 6ZM18 1v5l-5-5ZM0 17v-5l5 5ZM18 17h-5l5-5Z" fill="#222" />
              <rect x="5.500" y="5.500" width="7" height="7" fill="#e2e2e2" stroke="#222" strokeWidth="2" />
            </svg>
          </button>
          <button type="button" aria-label="Rect" className="flex w-[31px] items-center justify-center">
            <svg viewBox="0 0 18 18" className="h-[18px] w-[18px]">
              <path d="M2.500 2.500h13v13h-13Z" fill="none" stroke="#222" strokeWidth="1.300" />
              <path d="M1 1h4v4H1ZM13 1h4v4h-4ZM1 13h4v4H1ZM13 13h4v4h-4Z" fill="#222" />
              <circle cx="9" cy="9" r="2" fill="none" stroke="#222" />
            </svg>
          </button>
        </div>
        <div className={clsx('mt-px ml-5 flex h-[19px] rounded-[3px]', raised)}>
          <button type="button" className="flex w-16 items-center justify-center gap-1">
            <svg viewBox="0 0 11 8" className="h-2 w-[11px]">
              <path d="M0 1h5v5H0Z" fill="#555" />
              <path d="M6 0h2v7H6Z" fill="#b5434c" />
              <path d="M9 0h2v7H9Z" fill="#555" />
            </svg>
            Center
          </button>
          <button type="button" className="flex w-[62px] items-center justify-center gap-1 border-l border-[#666]">
            <svg viewBox="0 0 11 11" className="h-[11px] w-[11px]">
              <circle cx="5.500" cy="5.500" r="5" fill="#a9a9a9" stroke="#666" />
              <path d="M4 3h4v3H5v2H3Z" fill="#c06a70" />
            </svg>
            Global
          </button>
        </div>
      </div>
      <div className={clsx('flex h-[23px] divide-x divide-[#888] rounded-[3px]', raised)}>
        <button type="button" aria-label="Play" className="flex w-8 items-center justify-center">
          <svg viewBox="0 0 14 14" className="h-[14px] w-[14px]"><path d="M0 0v14l14-7Z" fill="#1a1a1a" /></svg>
        </button>
        <button type="button" aria-label="Pause" className="flex w-8 items-center justify-center">
          <svg viewBox="0 0 10 14" className="h-[14px] w-[10px]"><path d="M0 0h3v14H0ZM6 0h3v14H6Z" fill="#1a1a1a" /></svg>
        </button>
        <button type="button" aria-label="Step" className="flex w-[31px] items-center justify-center">
          <svg viewBox="0 0 16 14" className="h-[14px] w-4"><path d="M0 0v14l12-7ZM12 0h3v14h-3Z" fill="#1a1a1a" /></svg>
        </button>
      </div>
      <div className="flex w-[312px] justify-end gap-[10px]">
        {['Layers', 'Layout'].map((name) => (
          <button
            key={name}
            type="button"
            className={clsx('flex h-[19px] w-[100px] items-center justify-between rounded-[3px] pr-[7px] pl-[5px]', raised)}
          >
            {name}
            <Caret className="h-[4px] w-[6px]" />
          </button>
        ))}
      </div>
    </div>
  )
}

function ProgressDialog() {
  return (
    <div
      role="dialog"
      aria-label="Hold on"
      className="absolute top-[494px] left-[774px] w-[371px] rounded-[6px] border border-[#e4ecf2] bg-linear-to-r from-[#d3e6fa] via-[#b9dcff] via-59% to-[#6d7883] to-61% shadow-[0_0_10px_3px_rgba(0,0,0,0.75)] outline outline-[#222]"
    >
      <div className="rounded-[5px] bg-linear-to-b from-transparent from-30% to-[#55626f] to-50% px-[6px] pb-[6px]">
        <h2 className="flex h-[25px] items-center font-['Open_Sans',sans-serif] text-[#111]">Hold on</h2>
        <div className="h-[59px] border border-[#3c4650] bg-[#f0f0f0] px-[10px] pt-[11px]">
          <div className="h-4 rounded-[3px] border border-[#a6a6a6] bg-linear-to-b from-[#ececec] via-[#c9c9c9] to-[#d8d8d8]" />
          <p className="mt-[2px] font-['Open_Sans',sans-serif] text-[11px] leading-4 whitespace-nowrap text-[#111]">
            Editor\QCAR\ImageTargetTextures\MESISE...\MARKER_2_scaled.jpg
          </p>
        </div>
      </div>
      <svg viewBox="0 0 13 21" className="absolute top-[17px] left-[328px] h-[21px] w-[13px] overflow-visible">
        <path d="M.5.500v16l4-4 3 7 3-1.500-3-6.500h5Z" fill="#fff" stroke="#111" />
      </svg>
    </div>
  )
}

export default function App() {
  return (
    <div className="relative flex h-screen min-h-[1080px] flex-col bg-[#a2a2a2] font-['Noto_Sans',sans-serif] text-[12px] leading-4">
      <SharedGradients />
      <TitleBar />
      <nav className="flex h-[21px] shrink-0 items-center gap-3 bg-linear-to-b from-[#fbfcfe] via-[#dfe3ef] via-45% to-[#d8dbea] pl-[7px] font-['Open_Sans',sans-serif] text-[#6e7178]">
        {MENUS.map((menu) => (
          <button key={menu} type="button">
            {menu}
          </button>
        ))}
      </nav>
      <Toolbar />
      <main className="flex min-h-0 flex-1 gap-1 pb-[22px]">
        <div className="flex min-w-0 flex-1 flex-col gap-[7px]">
          <div className="flex min-h-0 flex-1 gap-1">
            <Hierarchy />
            <Scene />
          </div>
          <Project />
        </div>
        <Inspector />
      </main>
      <ProgressDialog />
    </div>
  )
}
